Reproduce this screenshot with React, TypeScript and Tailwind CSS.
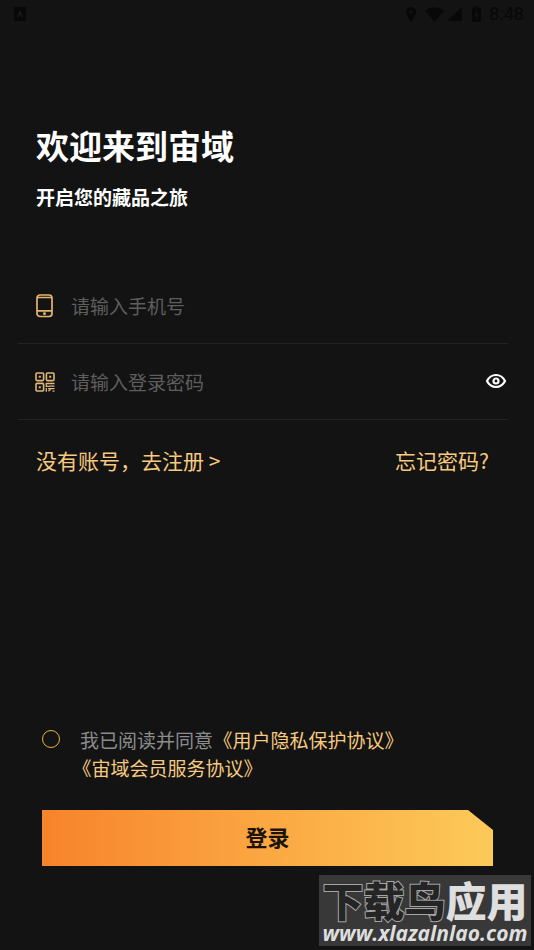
import { useState } from "react";

type IconProps = {
  className?: string;
};

export default function App() {
  const [showPassword, setShowPassword] = useState(false);

  return (
    <div className="relative flex min-h-screen flex-col bg-[#131313] font-['Noto_Sans_CJK_SC',sans-serif]">
      <StatusBar />

      <main className="flex flex-1 flex-col">
        {/* Welcome */}
        <header className="px-9 pt-[93px] text-white">
          <h1 className="text-[33px] leading-[48px] font-bold">欢迎来到宙域</h1>
          <p className="mt-3.5 text-[19px] leading-7 font-bold">开启您的藏品之旅</p>
        </header>

        <form id="login" className="mt-[57px] mr-[26px] ml-[18px]" onSubmit={(e) => e.preventDefault()}>
          <div className="flex h-[76px] items-center border-b border-[#232323] pl-[17px]">
            <PhoneIcon className="h-6 w-5 shrink-0" />
            <input
              type="tel"
              aria-label="手机号"
              placeholder="请输入手机号"
              className="ml-4 h-8 min-w-0 flex-1 bg-transparent text-[19px] text-white outline-none placeholder:text-[#5e5e5e]"
            />
          </div>
          <div className="flex h-[76px] items-center border-b border-[#232323] pl-[17px]">
            <QrIcon className="h-5 w-5 shrink-0" />
            <input
              type={showPassword ? "text" : "password"}
              aria-label="登录密码"
              placeholder="请输入登录密码"
              className="ml-4 h-8 min-w-0 flex-1 bg-transparent text-[19px] text-white outline-none placeholder:text-[#5e5e5e]"
            />
            <button type="button" aria-label="显示密码" onClick={() => setShowPassword(!showPassword)}>
              <EyeIcon className="h-5 w-6" />
            </button>
          </div>
        </form>

        <nav className="mt-6 flex justify-between pr-[45px] pl-9 text-[21px] leading-8 text-[#f6ca7f]">
          <a href="#register">没有账号，去注册 &gt;</a>
          <a href="#forgot">忘记密码?</a>
        </nav>

        {/* Agreement and submit */}
        <div className="mt-auto pr-[41px] pb-[84px] pl-[42px]">
          <div className="flex items-start gap-5">
            <input
              id="agree"
              type="checkbox"
              className="mt-1 h-[18px] w-[18px] shrink-0 appearance-none rounded-full border border-[#e5b345] checked:bg-[#e5b345]"
            />
            <label htmlFor="agree" className="text-[19px] leading-7 text-[#8c8c8c]">
              <span className="mr-2">我已阅读并同意</span>
              <a href="#privacy" className="px-0.5 text-[#f6ca7f] [font-feature-settings:'halt']">
                《用户隐私保护协议》
              </a>
              <br />
              <a href="#service" className="px-0.5 text-[#f6ca7f] [font-feature-settings:'halt']">
                《宙域会员服务协议》
              </a>
            </label>
          </div>
          <button
            type="submit"
            form="login"
            className="mt-7 h-14 w-full bg-linear-to-r from-[#f7832b] to-[#fcca58] pb-1 text-[22px] font-bold text-[#1c1206] [clip-path:polygon(0_0,calc(100%-25px)_0,100%_20px,100%_100%,0_100%)]"
          >
            登录
          </button>
        </div>
      </main>

      <Watermark />
    </div>
  );
}

function StatusBar() {
  return (
    <div className="flex h-7 items-center justify-between pr-2.5 pl-3.5 text-[#080808]">
      <svg viewBox="0 0 12 14" className="h-3.5 w-3" aria-hidden="true">
        <rect width="12" height="14" rx="1" fill="currentColor" />
        <path d="M6 3L3 10h1.500l.5-2h2l.5 2H9z" fill="#1c1c1c" />
      </svg>
      <div className="flex items-center">
        <svg viewBox="0 0 78 18" className="h-[18px] w-[78px]" fill="currentColor" aria-hidden="true">
          <path
            d="M6 2a5 5 0 0 0-5 5c0 4 5 9.500 5 9.500S11 11 11 7a5 5 0 0 0-5-5zm0 3.300a1.800 1.800 0 1 1 0 3.600 1.800 1.800 0 0 1 0-3.600z"
            fillRule="evenodd"
          />
          <path d="M20 5.500Q29.500-1 39 5.500L29.500 17z" />
          <path d="M57 2v14H42z" />
          <path d="M67 3h2.500V1.500h4V3H76v14h-9zM72 5l-3 5.500h2V15l3-5.500h-2z" fillRule="evenodd" />
        </svg>
        <span className="ml-1.5 font-[Roboto,sans-serif] text-[18px] leading-5">8:48</span>
      </div>
    </div>
  );
}

function PhoneIcon({ className }: IconProps) {
  return (
    <svg viewBox="0 0 20 24" className={className} fill="none" stroke="#e3b66c" strokeWidth="1.700" aria-hidden="true">
      <rect x="2" y="1" width="15" height="21.500" rx="3" />
      <path d="M2 3.500h15M2 16.800h15" />
      <rect x="8.300" y="18.400" width="2.400" height="2.400" fill="#f3cf8c" stroke="none" />
    </svg>
  );
}

function QrIcon({ className }: IconProps) {
  return (
    <svg viewBox="0 0 20 20" className={className} fill="none" stroke="#dfb877" strokeWidth="1.600" aria-hidden="true">
      <rect x="1" y="1" width="7.600" height="7.600" rx="1" />
      <rect x="11.400" y="1" width="7.600" height="7.600" rx="1" />
      <rect x="1" y="11.400" width="7.600" height="7.600" rx="1" />
      <path d="M3.800 4.800h2M14.200 4.800h2M3.800 15.200h2" strokeWidth="2" />
      <path
        d="M10.600 11.500H19.500M11.300 11v3.300h3.200M14.500 14.200h5M11.300 16v3.800M13 16.700h6.500M13.500 19.200l2-2M17.500 19.200h2"
        strokeWidth="1.300"
      />
    </svg>
  );
}

function EyeIcon({ className }: IconProps) {
  return (
    <svg viewBox="0 0 24 20" className={className} fill="none" stroke="#fff" strokeWidth="2.200" aria-hidden="true">
      <path d="M3 9C5 5 8.500 3 12 3s7 2 9 6c-2 4-5.500 6-9 6S5 13 3 9z" strokeLinejoin="round" />
      <circle cx="12" cy="9" r="2.500" />
    </svg>
  );
}

function Watermark() {
  return (
    <div className="absolute right-[3px] bottom-1 flex h-[71px] w-[212px] flex-col items-center bg-[#383838] text-[#dedede]">
      <div className="text-[41px] leading-[48px] font-black whitespace-nowrap">
        <span className="text-[#252525] [-webkit-text-stroke:2px_#a5a5a5] [paint-order:stroke_fill]">下载鸟</span>
        <span>应用</span>
      </div>
      <div className="font-['Open_Sans',sans-serif] text-[21px] leading-5 font-bold italic">www.xlazalnlao.com</div>
    </div>
  );
}
